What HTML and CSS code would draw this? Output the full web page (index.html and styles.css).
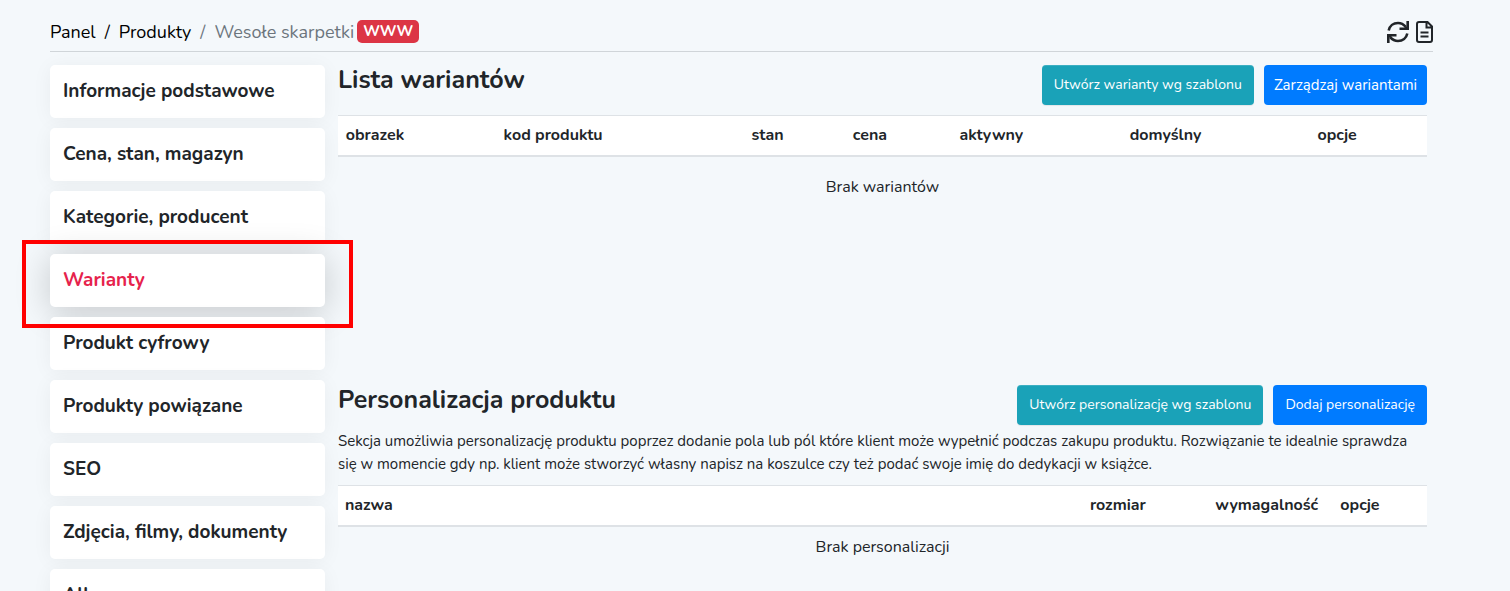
FILE: index.html
```html
<!DOCTYPE html>
<html lang="pl">
<head>
<meta charset="utf-8">
<meta name="viewport" content="width=device-width, initial-scale=1">
<title>Wesołe skarpetki</title>
<link rel="stylesheet" href="styles.css">
</head>
<body>
<div class="page">
  <header class="topbar">
    <nav class="breadcrumb" aria-label="Ścieżka">
      <a href="#">Panel</a><span>/</span><a href="#">Produkty</a><span class="muted">/</span><span class="muted">Wesołe skarpetki</span>
      <a class="badge" href="#">WWW</a>
    </nav>
    <div class="tools">
      <button type="button" class="tool" aria-label="Odśwież">
        <svg width="22" height="22" viewBox="0 0 22 22" fill="none" stroke="currentColor" stroke-width="2.600">
          <path d="M1.700 9.500C2.600 5 6.400 2 11 2c3 0 5.600 1.300 7.800 3.900"/>
          <path d="M20.300 12.500C19.400 17 15.600 20 11 20c-3 0-5.600-1.300-7.800-3.900"/>
          <path fill="currentColor" stroke="none" d="M19.400 0H22v9h-9.500V6.600h4.700l2.200-1zM2.600 22H0v-9h9.500v2.400H4.800l-2.200 1z"/>
        </svg>
      </button>
      <button type="button" class="tool" aria-label="Dokument">
        <svg width="17" height="22" viewBox="0 0 17 22" fill="none" stroke="currentColor" stroke-width="2">
          <path d="M3 1h8.500L16 5.500V19a2 2 0 0 1-2 2H3a2 2 0 0 1-2-2V3a2 2 0 0 1 2-2zM10.500 1v5.500H16M4.500 11.500h8M4.500 15.500h8"/>
        </svg>
      </button>
    </div>
  </header>
  <div class="columns">
    <nav class="side" aria-label="Sekcje produktu">
      <a class="card" href="#">Informacje podstawowe</a>
      <a class="card" href="#">Cena, stan, magazyn</a>
      <a class="card" href="#">Kategorie, producent</a>
      <a class="card active" href="#" aria-current="page">Warianty</a>
      <a class="card" href="#">Produkt cyfrowy</a>
      <a class="card" href="#">Produkty powiązane</a>
      <a class="card" href="#">SEO</a>
      <a class="card" href="#">Zdjęcia, filmy, dokumenty</a>
      <a class="card" href="#">Allegro</a>
    </nav>
    <main class="main">
      <section class="section variants">
        <div class="head">
          <h2>Lista wariantów</h2>
          <div class="actions">
            <button type="button" class="btn teal">Utwórz warianty wg szablonu</button>
            <button type="button" class="btn blue large">Zarządzaj wariantami</button>
          </div>
        </div>
        <table class="table centered">
          <colgroup><col class="w7"><col class="w26"><col class="w13"><col class="w5"><col class="w17"><col class="w15"><col></colgroup>
          <thead><tr><th>obrazek</th><th>kod produktu</th><th>stan</th><th>cena</th><th>aktywny</th><th>domyślny</th><th>opcje</th></tr></thead>
          <tbody><tr><td colspan="7">Brak wariantów</td></tr></tbody>
        </table>
      </section>
      <section class="section personal">
        <div class="head">
          <h2>Personalizacja produktu</h2>
          <div class="actions">
            <button type="button" class="btn teal">Utwórz personalizację wg szablonu</button>
            <button type="button" class="btn blue">Dodaj personalizację</button>
          </div>
        </div>
        <p class="lead">Sekcja umożliwia personalizację produktu poprzez dodanie pola lub pól które klient może wypełnić podczas zakupu produktu. Rozwiązanie te idealnie sprawdza się w momencie gdy np. klient może stworzyć własny napisz na koszulce czy też podać swoje imię do dedykacji w książce.</p>
        <table class="table">
          <colgroup><col><col class="w11"><col class="w11"><col class="w9"></colgroup>
          <thead><tr><th>nazwa</th><th>rozmiar</th><th>wymagalność</th><th>opcje</th></tr></thead>
          <tbody><tr><td colspan="4">Brak personalizacji</td></tr></tbody>
        </table>
      </section>
    </main>
  </div>
</div>
</body>
</html>
```
FILE: styles.css
```css
* { box-sizing: border-box; }
body {
  margin: 0;
  background: #f4f8fb;
  color: #212529;
  font: 16px/24px Nunito, Lato, "Open Sans", sans-serif;
}
a { color: inherit; text-decoration: none; }
button { font: inherit; cursor: pointer; }

.page { padding: 12px 77px 0 50px; }
.topbar {
  display: flex;
  justify-content: space-between;
  align-items: center;
  height: 40px;
  border-bottom: 1px solid #d0d5d9;
}
.breadcrumb {
  display: flex;
  align-items: center;
  gap: 9px;
  font-size: 18px;
  color: #000;
}
.breadcrumb .muted { color: #6c757d; }
.badge {
  margin-left: -6px;
  padding: 0 6px;
  border-radius: 5px;
  background: #dc3545;
  color: #fff;
  font-size: 15px;
  font-weight: 700;
  line-height: 23px;
}
.tools { display: flex; gap: 7px; }
.tool {
  display: flex;
  padding: 0;
  border: 0;
  background: none;
  color: #212529;
}

.columns { display: flex; gap: 13px; padding-top: 13px; }
.side {
  flex: 0 0 275px;
  display: flex;
  flex-direction: column;
  gap: 10px;
}
.card {
  position: relative;
  padding: 12px 13px;
  border-radius: 5px;
  background: #fff;
  box-shadow: 0 2px 20px rgba(0, 0, 0, 0.05);
  font-size: 19px;
  font-weight: 700;
  line-height: 29px;
}
.active {
  color: #e6224c;
  box-shadow: 0 4px 36px rgba(0, 0, 0, 0.2);
}
.active::after {
  content: "";
  position: absolute;
  z-index: 2;
  inset: -14px -28px -21px;
  border: 4px solid #f00;
}

.main { flex: 1; min-width: 0; margin-right: 6px; }
.variants { min-height: 320px; }
.head { display: flex; justify-content: space-between; }
h2 { margin: 0; font-size: 25px; font-weight: 700; line-height: 30px; }
.actions { display: flex; gap: 10px; }
.btn {
  height: 40px;
  padding: 0 12px;
  border: 0;
  border-radius: 4px;
  color: #fff;
  font-size: 14px;
  white-space: nowrap;
}
.large { padding: 0 10px; font-size: 15px; }
.teal {
  background: #1aa2b8;
  box-shadow: inset 0 1px 0 rgba(255, 255, 255, 0.15), 0 1px 1px rgba(0, 0, 0, 0.075);
}
.blue { background: #007bff; }
.lead { margin: 5px 0 9px; font-size: 15px; line-height: 23px; }

.table { width: 100%; border-spacing: 0; table-layout: fixed; }
.variants .table { margin-top: 10px; }
th {
  padding: 7px 7px 8px;
  border-top: 1px solid #dee2e6;
  border-bottom: 2px solid #dee2e6;
  background: #fff;
  text-align: left;
  font-weight: 700;
}
.centered th { text-align: center; }
td { padding: 8px 7px; text-align: center; }
.variants td { padding: 18px 7px; }
.w5 { width: 5.3%; }
.w7 { width: 6.8%; }
.w9 { width: 8.6%; }
.w11 { width: 11.5%; }
.w13 { width: 13.5%; }
.w15 { width: 15%; }
.w17 { width: 17%; }
.w26 { width: 25.9%; }
```
